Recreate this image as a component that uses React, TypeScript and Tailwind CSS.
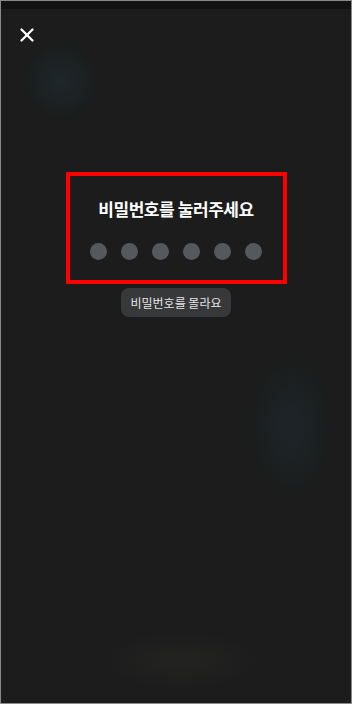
import { X } from 'lucide-react';

export default function App() {
  return (
    <div
      className="relative w-[352px] h-[704px] overflow-hidden bg-[#1b1c1b] border border-[#8a8a8a]"
      style={{ fontFamily: '"Noto Sans CJK KR", "Noto Sans", sans-serif' }}
    >
      {/* blurred backdrop */}
      <div className="absolute inset-x-0 top-0 h-[8px] bg-[#121312]"></div>
      <div className="absolute left-[20px] top-[40px] w-[80px] h-[80px] bg-[radial-gradient(closest-side,#1e272b,transparent)]"></div>
      <div className="absolute left-[245px] top-[350px] w-[90px] h-[150px] bg-[radial-gradient(closest-side,#1d2529,transparent)]"></div>
      <div className="absolute left-[100px] top-[630px] w-[160px] h-[60px] bg-[radial-gradient(closest-side,#232422,transparent)]"></div>

      <div className="relative flex flex-col h-full">
        {/* Top bar */}
        <div className="pt-[22px] pl-[14px]">
          <button className="w-[24px] h-[24px] flex items-center justify-center text-white">
            <X className="w-[22px] h-[22px]" strokeWidth={2.5} />
          </button>
        </div>

        {/* PIN section */}
        <div className="flex flex-col items-center mt-[125px]">
          <div className="w-[221px] h-[112px] border-[4px] border-[#ff0000] flex flex-col items-center">
            <h1 className="mt-[21px] text-[17px] leading-[24px] font-bold text-white tracking-tight">
              비밀번호를 눌러주세요
            </h1>
            <div className="flex gap-[14px] mt-[22px]">
              {[0, 1, 2, 3, 4, 5].map((i) => (
                <div key={i} className="w-[17px] h-[17px] rounded-full bg-[#55585d]"></div>
              ))}
            </div>
          </div>
          <button className="mt-[4px] w-[110px] h-[29px] rounded-[8px] bg-[#37383a] text-[12px] text-[#e4e4e4] flex items-center justify-center">
            비밀번호를 몰라요
          </button>
        </div>
      </div>
    </div>
  );
}
